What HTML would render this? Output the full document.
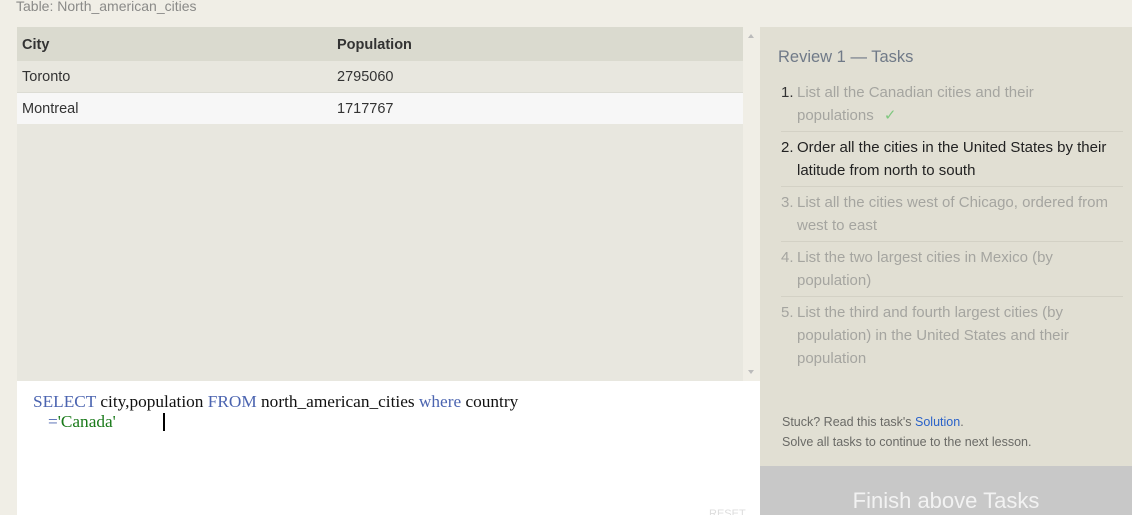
<!DOCTYPE html>
<html><head><style>
*{margin:0;padding:0;box-sizing:border-box}
html,body{width:1132px;height:515px;overflow:hidden}
body{background:#f0eee6;font-family:"Liberation Sans",sans-serif;position:relative}
.abs{position:absolute}
.cap{left:16px;top:-2px;font-size:14px;color:#8a8a88}
.tbl{left:17px;top:27px;width:726px;height:354px;background:#e8e7df}
.row{position:absolute;left:0;width:726px;font-size:14.5px;color:#333}
.row span{position:absolute;top:1px}
.hdr{top:0;height:34px;line-height:35px;background:#dadacf;font-weight:bold;color:#333}
.r1{top:34px;height:32px;line-height:31px;background:#e8e7df;border-bottom:1px solid #dcdcd4}
.r2{top:66px;height:31px;line-height:30px;background:#f7f7f7}
.sb{left:743px;top:27px;width:17px;height:354px;background:#f0eee6}
.ed{left:17px;top:381px;width:743px;height:134px;background:#fff;font-family:"Liberation Serif",serif;font-size:17.3px;color:#111}
.kw{color:#4b64b0}.st{color:#1a7a1a}
.rp{left:760px;top:27px;width:372px;height:439px;background:#e1dfd3}
.btn{left:760px;top:466px;width:372px;height:49px;background:#c8c8c8;color:#f2f2f2;font-size:22px;text-align:center;line-height:70px}
.rp h3{position:absolute;left:18px;top:21px;font-weight:normal;font-size:16.5px;color:#707a88}
ol{position:absolute;left:21px;top:54px;width:342px;list-style:none;font-size:15px;line-height:23px;color:#a5a5a0}
li{position:relative;padding-left:16px;padding-right:10px;padding-bottom:4px;margin-bottom:4px;border-bottom:1px solid #d3d1c5}
li:last-child{border:none}
li b{position:absolute;left:0;font-weight:normal}
.foot{position:absolute;left:22px;top:385px;font-size:12.5px;color:#6a6a66;line-height:20px}
</style></head><body>
<div class="abs cap">Table: North_american_cities</div>
<div class="abs tbl">
<div class="row hdr"><span style="left:5px">City</span><span style="left:320px">Population</span></div>
<div class="row r1"><span style="left:5px">Toronto</span><span style="left:320px">2795060</span></div>
<div class="row r2"><span style="left:5px">Montreal</span><span style="left:320px">1717767</span></div>
</div>
<div class="abs sb"><div class="abs" style="left:5px;top:7px;border:3px solid transparent;border-bottom:4px solid #bbb;border-top:0"></div><div class="abs" style="left:5px;top:343px;border:3px solid transparent;border-top:4px solid #bbb;border-bottom:0"></div></div>
<div class="abs ed">
<div class="abs" style="left:16px;top:11px;white-space:nowrap"><span class="kw">SELECT</span> city,population <span class="kw">FROM</span> north_american_cities <span class="kw">where</span> country</div>
<div class="abs" style="left:31px;top:31px"><span class="kw">=</span><span class="st">'Canada'</span></div>
<div class="abs" style="left:146px;top:32px;width:2px;height:18px;background:#000"></div>
<div class="abs" style="left:692px;top:127px;font-family:'Liberation Sans';font-size:11px;color:#ddd">RESET</div>
</div>
<div class="abs rp">
<h3>Review 1 — Tasks</h3>
<ol>
<li><b style="color:#333">1.</b>List all the Canadian cities and their<br>populations <span style="color:#7fc77f;margin-left:6px">✓</span></li>
<li style="color:#222"><b>2.</b>Order all the cities in the United States by their latitude from north to south</li>
<li><b>3.</b>List all the cities west of Chicago, ordered from<br>west to east</li>
<li><b>4.</b>List the two largest cities in Mexico (by<br>population)</li>
<li><b>5.</b>List the third and fourth largest cities (by<br>population) in the United States and their<br>population</li>
</ol>
<div class="foot">Stuck? Read this task's <span style="color:#2a62c9">Solution</span>.<br>Solve all tasks to continue to the next lesson.</div>
</div>
<div class="abs btn">Finish above Tasks</div>
</body></html>
